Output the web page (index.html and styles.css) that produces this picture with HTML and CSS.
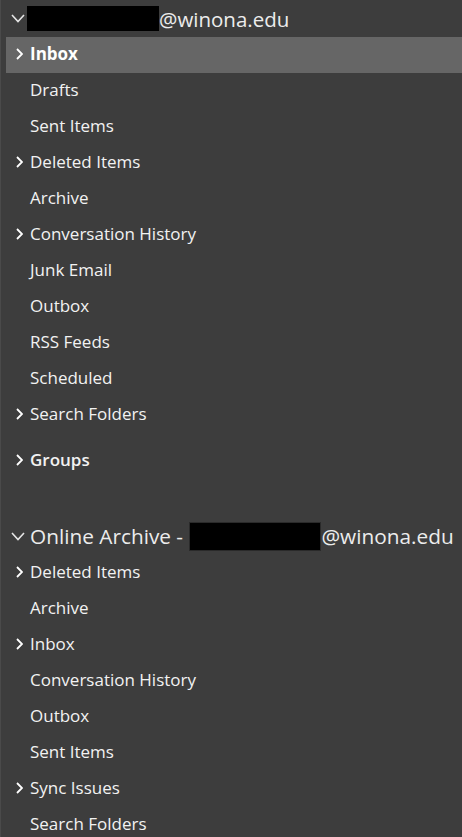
FILE: index.html
```html
<!DOCTYPE html>
<html>
<head>
<meta charset="utf-8">
<link rel="stylesheet" href="styles.css">
</head>
<body>
<div class="pane">
  <div class="acct">
    <svg class="down" width="14" height="9" viewBox="0 0 14 9"><path d="M1 1 L7 7.5 L13 1" fill="none" stroke="#e6e6e6" stroke-width="1.6"/></svg>
    <span class="redact r1"></span><span class="acct-text">@winona.edu</span>
  </div>
  <ul class="list">
    <li class="row sel bold"><svg class="chev" width="7" height="12" viewBox="0 0 7 12"><path d="M1 1 L6 6 L1 11" fill="none" stroke="#fff" stroke-width="1.8"/></svg><span>Inbox</span></li>
    <li class="row"><span>Drafts</span></li>
    <li class="row"><span>Sent Items</span></li>
    <li class="row"><svg class="chev" width="7" height="12" viewBox="0 0 7 12"><path d="M1 1 L6 6 L1 11" fill="none" stroke="#fff" stroke-width="1.8"/></svg><span>Deleted Items</span></li>
    <li class="row"><span>Archive</span></li>
    <li class="row"><svg class="chev" width="7" height="12" viewBox="0 0 7 12"><path d="M1 1 L6 6 L1 11" fill="none" stroke="#fff" stroke-width="1.8"/></svg><span>Conversation History</span></li>
    <li class="row"><span>Junk Email</span></li>
    <li class="row"><span>Outbox</span></li>
    <li class="row"><span>RSS Feeds</span></li>
    <li class="row"><span>Scheduled</span></li>
    <li class="row"><svg class="chev" width="7" height="12" viewBox="0 0 7 12"><path d="M1 1 L6 6 L1 11" fill="none" stroke="#fff" stroke-width="1.8"/></svg><span>Search Folders</span></li>
    <li class="row groups"><svg class="chev" width="7" height="12" viewBox="0 0 7 12"><path d="M1 1 L6 6 L1 11" fill="none" stroke="#fff" stroke-width="1.8"/></svg><span>Groups</span></li>
  </ul>
  <div class="acct acct2">
    <svg class="down" width="14" height="9" viewBox="0 0 14 9"><path d="M1 1 L7 7.5 L13 1" fill="none" stroke="#e6e6e6" stroke-width="1.6"/></svg>
    <span class="acct-text">Online Archive -&nbsp;</span><span class="redact r2"></span><span class="acct-text">@winona.edu</span>
  </div>
  <ul class="list">
    <li class="row"><svg class="chev" width="7" height="12" viewBox="0 0 7 12"><path d="M1 1 L6 6 L1 11" fill="none" stroke="#fff" stroke-width="1.8"/></svg><span>Deleted Items</span></li>
    <li class="row"><span>Archive</span></li>
    <li class="row"><svg class="chev" width="7" height="12" viewBox="0 0 7 12"><path d="M1 1 L6 6 L1 11" fill="none" stroke="#fff" stroke-width="1.8"/></svg><span>Inbox</span></li>
    <li class="row"><span>Conversation History</span></li>
    <li class="row"><span>Outbox</span></li>
    <li class="row"><span>Sent Items</span></li>
    <li class="row"><svg class="chev" width="7" height="12" viewBox="0 0 7 12"><path d="M1 1 L6 6 L1 11" fill="none" stroke="#fff" stroke-width="1.8"/></svg><span>Sync Issues</span></li>
    <li class="row"><span>Search Folders</span></li>
  </ul>
</div>
</body>
</html>
```
FILE: styles.css
```css
html, body {
  margin: 0;
  padding: 0;
  background: #3d3d3d;
  height: 100%;
  overflow: hidden;
}
.pane {
  width: 462px;
  height: 837px;
  box-sizing: border-box;
  border-left: 1px solid #4a4a4a;
  background: #3d3d3d;
  font-family: "Open Sans", "Noto Sans", sans-serif;
  color: #f2f2f2;
}
.acct {
  height: 37px;
  display: flex;
  align-items: center;
  font-size: 20.5px;
  color: #ececec;
  white-space: nowrap;
}
.acct .down {
  margin-left: 10px;
  margin-right: 2px;
  flex: none;
}
.acct2 {
  margin-top: 40px;
  height: 36px;
  font-size: 20.8px;
  padding-bottom: 2px;
  box-sizing: border-box;
}
.acct2 .down { margin-right: 5px; margin-left: 10px; }
.redact {
  display: inline-block;
  background: #000;
  height: 25px;
  flex: none;
}
.r1 { width: 132px; margin-top: -1px; }
.r2 { width: 132px; height: 29px; border: 1px solid #2a2a2a; box-sizing: border-box; margin-left: 1px; }
.list {
  list-style: none;
  margin: 0;
  padding: 0;
}
.row {
  height: 36px;
  display: flex;
  align-items: center;
  padding-left: 29px;
  position: relative;
  font-size: 17px;
  white-space: nowrap;
  line-height: 1;
  padding-bottom: 3px;
  box-sizing: border-box;
}
.row .chev {
  position: absolute;
  left: 15px;
  top: 11px;
}
.sel {
  background: #666666;
  margin-left: 5px;
  padding-left: 24px;
}
.sel .chev { left: 10px; }
.bold { font-weight: 700; color: #fff; }
.groups { margin-top: 10px; font-weight: 600; }
```
